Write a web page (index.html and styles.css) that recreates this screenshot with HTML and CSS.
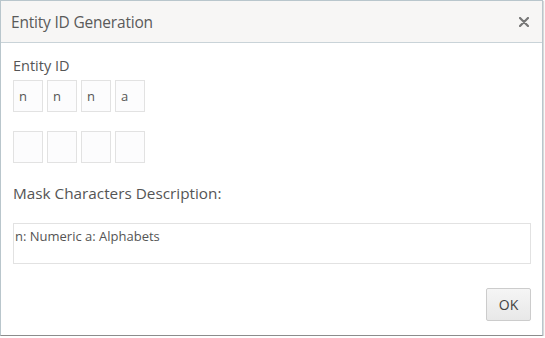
FILE: index.html
```html
<!DOCTYPE html>
<html>
<head>
<meta charset="utf-8">
<link rel="stylesheet" href="styles.css">
</head>
<body>
<div class="dialog">
  <div class="header">
    <span class="title">Entity ID Generation</span>
    <svg class="close" width="10" height="10" viewBox="0 0 10 10"><path d="M1 1 L9 9 M9 1 L1 9" stroke="#777" stroke-width="2.2" stroke-linecap="round"/></svg>
  </div>
  <div class="body">
    <div class="label">Entity ID</div>
    <div class="row">
      <div class="cell">n</div>
      <div class="cell">n</div>
      <div class="cell">n</div>
      <div class="cell">a</div>
    </div>
    <div class="row row2">
      <div class="cell"></div>
      <div class="cell"></div>
      <div class="cell"></div>
      <div class="cell"></div>
    </div>
    <div class="label desc-label">Mask Characters Description:</div>
    <div class="desc">n: Numeric a: Alphabets</div>
    <div class="footer">
      <button class="ok">OK</button>
    </div>
  </div>
</div>
</body>
</html>
```
FILE: styles.css
```css
html, body {
  margin: 0;
  padding: 0;
  background: #ffffff;
}
body {
  font-family: "Open Sans", "Noto Sans", sans-serif;
  color: #555;
}
.dialog {
  width: 543px;
  height: 336px;
  border: 1px solid #b9c6cc;
  border-bottom-color: #8c8c8c;
  box-sizing: border-box;
  display: flex;
  flex-direction: column;
  box-shadow: 1px 1px 1px rgba(0,0,0,0.15);
}
.header {
  height: 42px;
  background: #f7f6f5;
  border-bottom: 1px solid #c9d3d8;
  display: flex;
  align-items: center;
  justify-content: space-between;
  padding: 0 13px 0 10px;
  box-sizing: border-box;
}
.title {
  font-size: 15.5px;
  color: #5a5a5a;
  letter-spacing: -0.2px;
}
.close {
  display: block;
}
.body {
  padding: 13px 11px 0 12px;
  flex: 1;
  display: flex;
  flex-direction: column;
}
.label {
  font-size: 14.5px;
  color: #555;
  line-height: 20px;
}
.row {
  display: flex;
  gap: 4px;
  margin-top: 4px;
}
.row2 {
  margin-top: 19px;
}
.cell {
  width: 30px;
  height: 32px;
  border: 1px solid #e2e2e2;
  box-sizing: border-box;
  background: #fcfcfd;
  font-size: 13px;
  color: #555;
  padding-left: 5px;
  line-height: 30px;
}
.desc-label {
  margin-top: 20px;
  font-size: 15.3px;
}
.desc {
  margin-top: 20px;
  height: 41px;
  border: 1px solid #e2e2e2;
  box-sizing: border-box;
  font-size: 13px;
  color: #555;
  padding: 3px 0 0 1px;
}
.footer {
  display: flex;
  justify-content: flex-end;
  margin-top: 24px;
}
.ok {
  width: 45px;
  height: 33px;
  border: 1px solid #cccccc;
  border-radius: 2px;
  background: linear-gradient(#f5f5f5, #e8e8e8);
  font-family: inherit;
  font-size: 14px;
  color: #444;
  padding: 0;
}
```
